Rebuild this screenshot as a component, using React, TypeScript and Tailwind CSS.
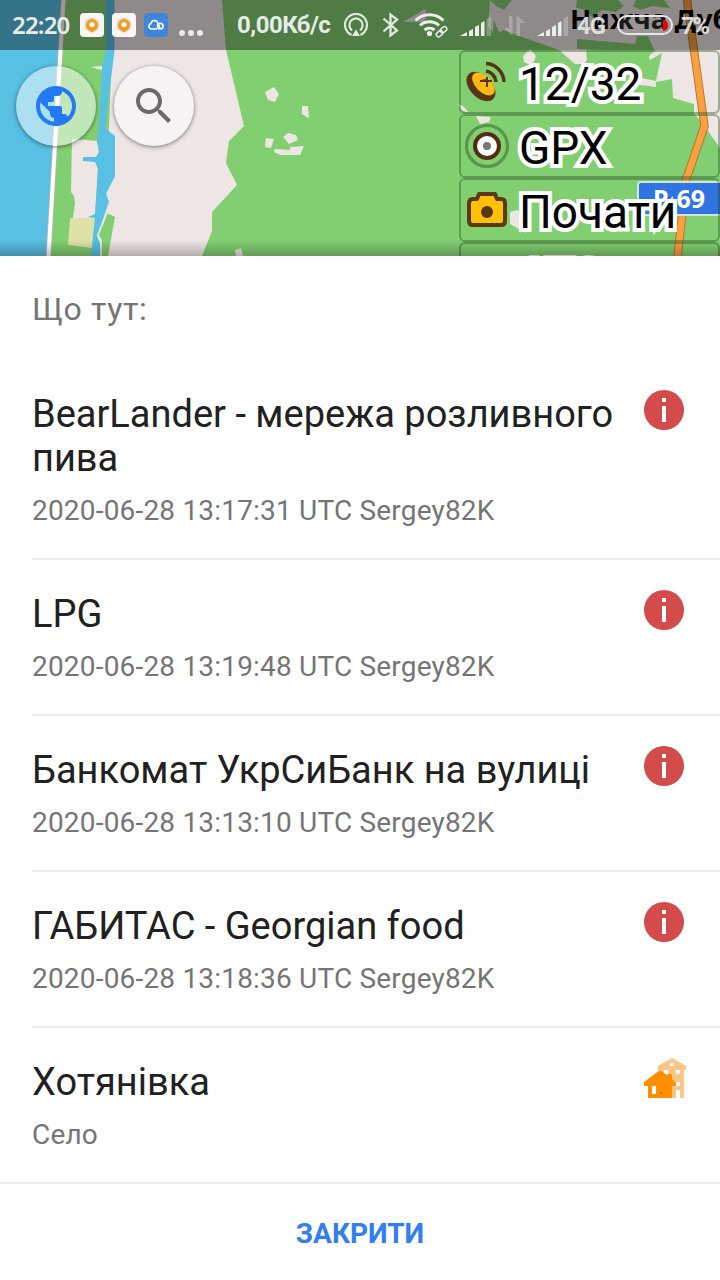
import React from 'react';

const POINTS = [
  { id: 1, title: 'BearLander - мережа розливного пива', subtitle: '2020-06-28 13:17:31 UTC Sergey82K', kind: 'note' },
  { id: 2, title: 'LPG', subtitle: '2020-06-28 13:19:48 UTC Sergey82K', kind: 'note' },
  { id: 3, title: 'Банкомат УкрСиБанк на вулиці', subtitle: '2020-06-28 13:13:10 UTC Sergey82K', kind: 'note' },
  { id: 4, title: 'ГАБИТАС - Georgian food', subtitle: '2020-06-28 13:18:36 UTC Sergey82K', kind: 'note' },
  { id: 5, title: 'Хотянівка', subtitle: 'Село', kind: 'village' },
];

function MapCanvas() {
  return (
    <svg className="absolute inset-0" width="720" height="256" viewBox="0 0 720 256">
      <rect width="720" height="256" fill="#82cf72" />
      <path d="M0 0H63L48 256H0Z" fill="#58c0e3" />
      {/* left bank */}
      <path d="M72 139L97 141L99 152L96 158L98 169L95 218L73 218L75 203L74 196L71 192Z" fill="#eee6e4" />
      <path d="M70 218H95L92 248L68 245Z" fill="#dfe2a8" />
      {/* land between the channel and the forest */}
      <path d="M114 0H222L226 50L244 126L229 141L226 163L237 185L212 212V231L202 256H97V236L106 200Z" fill="#eee6e4" />
      <path d="M105.500 0H114.500V50L105 128L115 136V176L106 194L109 202L97 236L100 243V256H91L95 218L88 217L95 214L98 169L95 162L83 161V157L96 157L99 152L97 141L99.500 118L102 68L106 50Z" fill="#58c0e3" />
      <path d="M107 213L115 217L108 256H101L102 241L98 236Z" fill="#82cf72" />
      <path d="M107 213L98 235L101 240V256" fill="none" stroke="#eee6e4" strokeWidth="1.500" />
      <path d="M90 67L102 66V70Z" fill="#eee6e4" />
      <path d="M63.500 0L48.500 256" stroke="#b9b4a8" strokeWidth="5.500" />
      <path d="M63.500 0L48.500 256" stroke="#fff" strokeWidth="4" />
      {/* clearings */}
      <path
        d="M265 92L274 87L279 94L275 102L268 100ZM302 106H308L309 118L302 114ZM266 138L274 139L271 148L265 147ZM283 137L288 133L296 135L298 140L289 144ZM275 149L290 150V147L304 146L300 155H280L274 152ZM235 250L241 248L243 256H236ZM403 22L425 9L427 16L424 22ZM458 104L463 106L469 113L461 110ZM476 116L491 117L489 122L480 124ZM523 56L530 49L536 56L532 66L524 62ZM510 212L518 210L526 233L510 224Z"
        fill="#eee6e4"
      />
      <path d="M490 0H720V148L708 131L694 113V104L673 98L672 79L656 82V87L640 85L637 77L656 81L662 53L650 60L649 56L656 50H586L587 60L584 64H575L559 50L536 42L503 30L499 33L494 20L493 33L488 26Z" fill="#eee6e4" />
      <path d="M490 0H512L504 10L496 6ZM577 0H618L624 6L616 12L602 10L592 17L586 10L576 8ZM636 0H664L670 8L652 6L640 10L633 6ZM577 39L635 44L637 36H648L655 52L577 49Z" fill="#82cf72" />
      <path d="M687 0L704.500 126L686 180L677 262" fill="none" stroke="#b0793a" strokeWidth="8.500" />
      <path d="M687 0L704.500 126L686 180L677 262" fill="none" stroke="#fba03f" strokeWidth="6.500" />
      <rect x="638" y="182" width="90" height="33" rx="3" fill="#2f74e0" stroke="#d5e3df" strokeWidth="2" />
      <text x="653" y="208" fontSize="25" fill="#fff" className="font-['Noto_Sans'] font-bold">P-69</text>
      <text x="570" y="29" fontSize="27.600" fill="#000" className="font-['Noto_Sans'] font-bold">Нижча Дубечня</text>
    </svg>
  );
}

function OsmAndIcon() {
  return (
    <svg width="24" height="24" viewBox="0 0 24 24">
      <rect width="24" height="24" rx="4" fill="#f8f6f2" />
      <circle cx="12" cy="12" r="7.500" fill="#ddd8d0" />
      <path d="M12 19.500L7.500 16A6 6 0 1 1 16.500 16Z" fill="#f59a1c" />
      <circle cx="12" cy="11.500" r="2.600" fill="#fff" />
    </svg>
  );
}

function CloudIcon() {
  return (
    <svg width="24" height="24" viewBox="0 0 24 24">
      <rect width="24" height="24" rx="4" fill="#3d86dc" />
      <path d="M13 16H7.500A2.800 2.800 0 0 1 7 10.500A3.500 3.500 0 0 1 13.800 10L16 15" fill="none" stroke="#fff" strokeWidth="1.600" />
      <circle cx="16.300" cy="13.200" r="2.800" fill="none" stroke="#fff" strokeWidth="1.600" />
    </svg>
  );
}

function Signal() {
  return (
    <svg width="32" height="24" viewBox="0 0 32 24" fill="#e9efe8">
      <path d="M0 23L7 19V23ZM9 18L13 16V23H9ZM15 14L19 12V23H15ZM21 10L24.500 8V23H21Z" />
      <path d="M26.500 6.500L31 3V23H26.500Z" opacity=".3" />
    </svg>
  );
}

function StatusBar() {
  return (
    <div className="relative flex h-[50px] items-center bg-black/40 pl-3 text-[#e6ebe6]">
      <span className="w-[68px] font-['Noto_Sans'] text-2xl font-semibold tracking-[-0.8px]">22:20</span>
      <div className="flex w-[99px] gap-2">
        <OsmAndIcon />
        <OsmAndIcon />
        <CloudIcon />
      </div>
      <svg className="mt-4" width="58" height="8" viewBox="0 0 58 8" fill="#e9e9e6">
        <circle cx="3" cy="4" r="3" />
        <circle cx="12" cy="4" r="3" />
        <circle cx="21" cy="4" r="3" />
      </svg>
      <span className="w-[107px] text-2xl font-bold tracking-[-0.5px] whitespace-nowrap">0,00Кб/с</span>
      <svg width="38" height="24" viewBox="0 0 38 24" fill="none" stroke="#e0ebdd" strokeWidth="2.200">
        <path d="M7.500 21.900A11 11 0 1 1 16.500 21.900" />
        <path d="M8 17.300A6.600 6.600 0 1 1 16 17.300" />
        <path d="M12 16.500L16 23H8Z" fill="#e0ebdd" stroke="none" />
      </svg>
      <svg width="32" height="26" viewBox="0 0 32 26" fill="none" stroke="#e0ebdd" strokeWidth="2.300">
        <path d="M1.500 6.500L15 18.500L8.500 23.500V2.500L15 7.500L1.500 19.500" />
      </svg>
      <svg width="46" height="26" viewBox="0 0 46 26" fill="none" stroke="#eceee9" strokeWidth="3">
        <path d="M1.500 8.500A20 20 0 0 1 29.500 8.500" />
        <path d="M6 13.500A14 14 0 0 1 25 13.500" />
        <path d="M10.500 18A8 8 0 0 1 20.500 18" />
        <circle cx="15.500" cy="21.500" r="2.600" fill="#eceee9" stroke="none" />
        <g strokeWidth="1.500">
          <rect x="22" y="19.500" width="7" height="4.500" rx="2.200" transform="rotate(-40 25.500 21.700)" />
          <rect x="26" y="15.500" width="7" height="4.500" rx="2.200" transform="rotate(-40 29.500 17.700)" />
        </g>
      </svg>
      <Signal />
      <svg className="mr-3 ml-3 opacity-30" width="21" height="24" viewBox="0 0 21 24" fill="#e9efe8">
        <path d="M5 3H8.500V23L0 15H5ZM12.500 23H16V10H21L12.500 2Z" />
      </svg>
      <Signal />
      <span className="ml-2 w-10 pt-0.5 text-2xl font-bold tracking-[-1px] opacity-90">4G</span>
      <div className="flex h-5 w-14 items-center justify-end rounded-full border-2 border-[#e6e6e4] bg-white/10 pr-[3px]">
        <div className="h-[11px] w-[5px] rounded-r-full bg-red-600" />
      </div>
      <span className="ml-2 pt-0.5 text-2xl font-bold tracking-[-2.500px] opacity-90">7%</span>
    </div>
  );
}

function SatelliteIcon() {
  return (
    <svg width="44" height="44" viewBox="0 0 44 44">
      <ellipse cx="16" cy="26.500" rx="17.500" ry="11" transform="rotate(46 16 26.500)" fill="#5a3312" />
      <ellipse cx="18.500" cy="24" rx="14" ry="8" transform="rotate(46 18.500 24)" fill="#fdb913" />
      <path d="M15 21L27 21M22 17V27M21 20L16 21" stroke="#5a3312" strokeWidth="2" />
      <path d="M21 11A12 12 0 0 1 31 22" fill="none" stroke="#5a3312" strokeWidth="3.500" />
      <path d="M21 3.500A19 19 0 0 1 39 22" fill="none" stroke="#5a3312" strokeWidth="3.500" />
    </svg>
  );
}

function GpxIcon() {
  return (
    <svg width="44" height="44" viewBox="0 0 44 44">
      <circle cx="22" cy="22" r="20.500" fill="none" stroke="#56974c" strokeWidth="3.200" />
      <circle cx="22" cy="22" r="12" fill="#fff" stroke="#522d14" strokeWidth="4" />
      <circle cx="22" cy="22" r="4" fill="#777" />
    </svg>
  );
}

function CameraIcon() {
  return (
    <svg width="44" height="44" viewBox="0 0 44 44">
      <path d="M4 15Q4 11 8 11H12L14 6H30L32 11H36Q40 11 40 15V33Q40 37 36 37H8Q4 37 4 33Z" fill="#ffc107" stroke="#5a3a12" strokeWidth="4" strokeLinejoin="round" />
      <circle cx="22" cy="24" r="6" fill="#5a3312" />
    </svg>
  );
}

const WIDGETS = [
  { label: '12/32', icon: <SatelliteIcon /> },
  { label: 'GPX', icon: <GpxIcon /> },
  { label: 'Почати', icon: <CameraIcon /> },
  { label: 'ATC', icon: null },
];

function MapWidgets() {
  return (
    <div className="w-[261px]">
      {WIDGETS.map((w) => (
        <div key={w.label} className="flex h-16 items-center rounded-md border-[2.500px] border-[#22501f]/40 pl-1">
          <div className="w-[54px] shrink-0">{w.icon}</div>
          <span className="pt-1 text-[46px] leading-none whitespace-nowrap text-black [-webkit-text-stroke:8px_white] [paint-order:stroke_fill]">
            {w.label}
          </span>
        </div>
      ))}
    </div>
  );
}

function MapHeader() {
  return (
    <div className="relative h-64 overflow-hidden">
      <MapCanvas />
      <StatusBar />
      <div className="relative flex justify-between">
        <div className="flex gap-[18px] pt-4 pl-4">
          <button className="flex size-20 items-center justify-center rounded-full bg-white/50 shadow-[0_1px_4px_rgba(0,0,0,0.5)]">
            <svg width="48" height="48" viewBox="0 0 24 24" fill="#2479f5">
              <path d="M12 2C6.480 2 2 6.480 2 12s4.480 10 10 10 10-4.480 10-10S17.520 2 12 2zm-1 17.930c-3.950-.490-7-3.850-7-7.930 0-.620.080-1.210.210-1.790L9 15v1c0 1.100.9 2 2 2v1.930zm6.900-2.540c-.260-.810-1-1.390-1.900-1.390h-1v-3c0-.550-.450-1-1-1H8v-2h2c.550 0 1-.450 1-1V7h2c1.100 0 2-.9 2-2v-.410c2.930 1.190 5 4.060 5 7.410 0 2.080-.8 3.970-2.100 5.390z" />
            </svg>
          </button>
          <button className="flex size-20 items-center justify-center rounded-full bg-white/50 shadow-[0_1px_4px_rgba(0,0,0,0.5)]">
            <svg width="48" height="48" viewBox="0 0 24 24" fill="#6c6a69">
              <path d="M15.500 14h-.790l-.280-.270C15.410 12.590 16 11.110 16 9.500 16 5.910 13.090 3 9.500 3S3 5.910 3 9.500 5.910 16 9.500 16c1.610 0 3.090-.590 4.230-1.570l.270.280v.790l5 4.990L20.490 19l-4.990-5zm-6 0C7.010 14 5 11.990 5 9.500S7.010 5 9.500 5 14 7.010 14 9.500 11.990 14 9.500 14z" />
            </svg>
          </button>
        </div>
        <MapWidgets />
      </div>
      <div className="absolute inset-x-0 bottom-0 h-4 bg-linear-to-t from-black/25 to-transparent" />
    </div>
  );
}

function NoteIcon() {
  return (
    <svg width="40" height="40" viewBox="0 0 40 40">
      <circle cx="20" cy="20" r="20" fill="#d34b4b" />
      <path d="M18 8h4v4h-4zM18 16h4v16h-4z" fill="#fff" />
    </svg>
  );
}

function VillageIcon() {
  return (
    <svg width="42" height="40" viewBox="0 0 42 40">
      <path d="M28 0L42 8V12H40V40H18V12H14V8Z" fill="#ffc587" />
      <path d="M26 5h4v3h-4zM20 12h4v4h-4zM32 12h4v4h-4zM32 24h4v4h-4zM32 32h4v8h-4z" fill="#fff" />
      <path d="M16 12L24 18V16H28V21L32 25V28H28V40H4V28H0V24Z" fill="#ff8f00" />
      <path d="M8 28h4v8h-4z" fill="#fff" />
      <path d="M16 34h2v2h-2z" fill="#b87018" />
    </svg>
  );
}

export default function App() {
  return (
    <div className="h-[1280px] w-[720px] overflow-hidden bg-white font-[Roboto,sans-serif]">
      <MapHeader />
      <h1 className="h-[104px] pt-[34px] pl-8 text-[32px] leading-[38px] tracking-[0.6px] text-[#757575]">Що тут:</h1>
      <ul>
        {POINTS.map((p) => (
          <li key={p.id} className="group">
            <div className="flex h-[154px] items-start justify-between pt-[30px] pr-9 pl-8 group-first:h-[198px]">
              <div className="w-[590px]">
                <p className="pt-0.5 text-[38px] leading-[44px] text-[#212121]">{p.title}</p>
                <p className="mt-3.5 text-[28px] leading-[34px] tracking-[0.19px] text-[#757575]">{p.subtitle}</p>
              </div>
              <div className="-mr-px w-[41px] shrink-0">{p.kind === 'note' ? <NoteIcon /> : <VillageIcon />}</div>
            </div>
            <div className="ml-8 h-0.5 bg-[#ececec] group-last:ml-0" />
          </li>
        ))}
      </ul>
      <button className="flex h-24 w-full items-center justify-center pt-1 text-[28px] font-bold text-[#337ef0]">ЗАКРИТИ</button>
    </div>
  );
}
